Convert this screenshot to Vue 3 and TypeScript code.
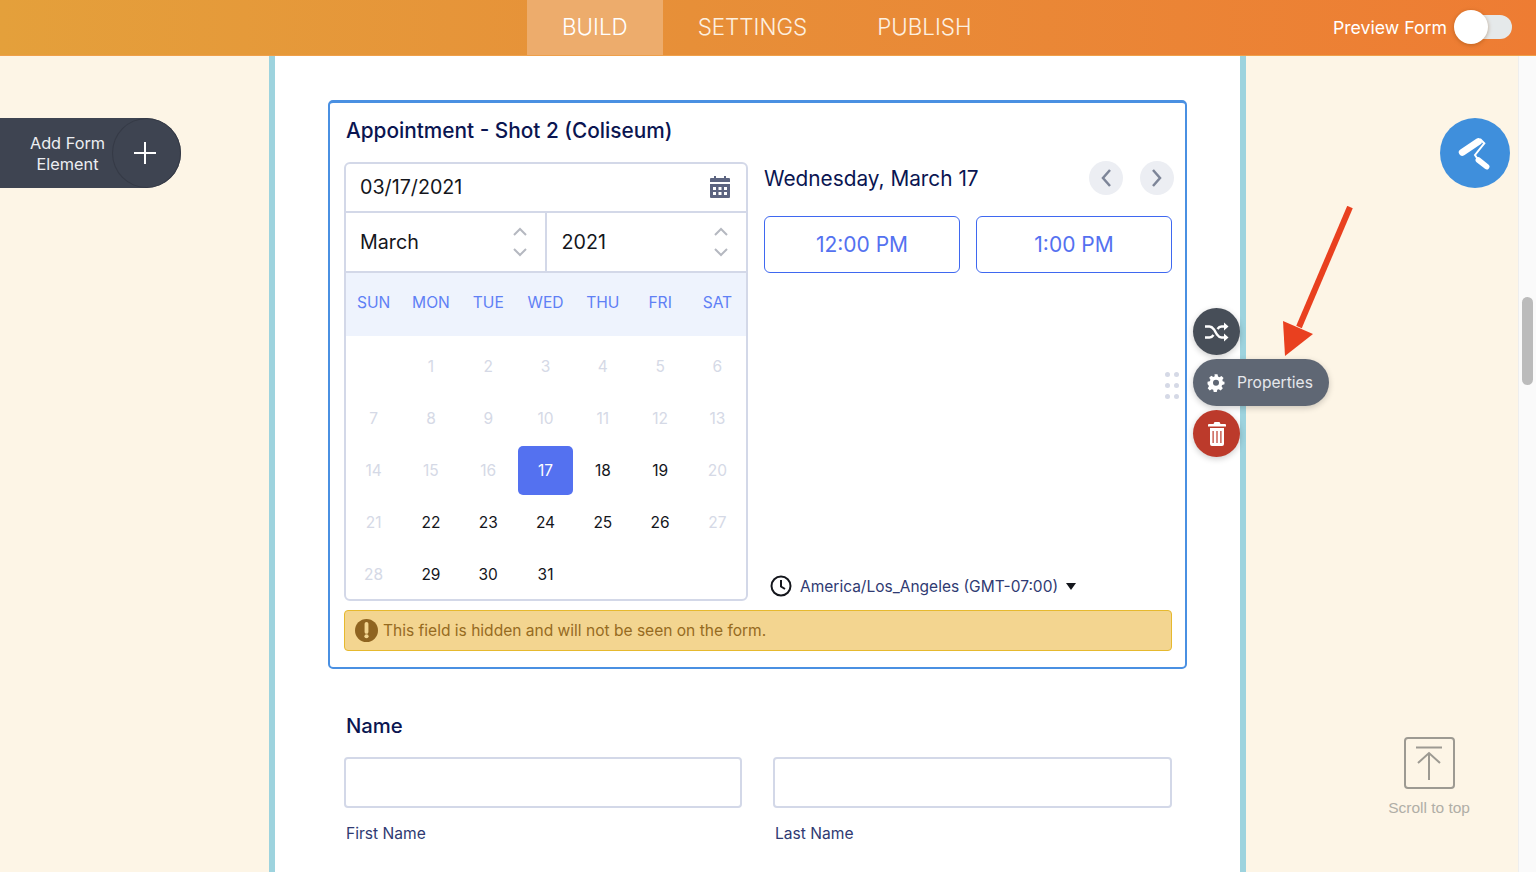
<template>
  <div class="page">
    <header class="topbar">
      <nav class="tabs">
        <a v-for="tab in tabs" :key="tab" class="tab" :class="{ active: tab === 'BUILD' }">{{ tab }}</a>
      </nav>
      <div class="preview">
        <span>Preview Form</span>
        <span class="toggle"><span class="knob"></span></span>
      </div>
    </header>

    <main class="workspace">
      <aside class="left-rail">
        <button class="add-element">
          <span class="add-label">Add Form<br />Element</span>
          <span class="add-plus">
            <svg width="24" height="24" viewBox="0 0 24 24"><path d="M12 1v22M1 12h22" stroke="#fff" stroke-width="2" fill="none" /></svg>
          </span>
        </button>
      </aside>

      <section class="canvas">
        <div class="field-box">
          <h2 class="field-title">Appointment - Shot 2 (Coliseum)</h2>
          <div class="appointment">
            <div class="calendar">
              <div class="date-row">
                <span>03/17/2021</span>
                <svg width="22" height="22" viewBox="0 0 22 22">
                  <path fill="#5c6480" d="M5 0h2v2h8V0h2v2h3a1 1 0 0 1 1 1v3H1V3a1 1 0 0 1 1-1h3zM1 8h20v13a1 1 0 0 1-1 1H2a1 1 0 0 1-1-1zm3 3v3h3v-3zm5.500 0v3h3v-3zm5.500 0v3h3v-3zM4 16v3h3v-3zm5.500 0v3h3v-3zm5.500 0v3h3v-3z" />
                </svg>
              </div>
              <div class="select-row">
                <div v-for="s in selects" :key="s" class="select-cell">
                  <span>{{ s }}</span>
                  <span class="stepper">
                    <svg width="14" height="9" viewBox="0 0 14 9"><path d="M1 8l6-6 6 6" stroke="#b5b8c0" stroke-width="2" fill="none" /></svg>
                    <svg width="14" height="9" viewBox="0 0 14 9"><path d="M1 1l6 6 6-6" stroke="#b5b8c0" stroke-width="2" fill="none" /></svg>
                  </span>
                </div>
              </div>
              <div class="week-head">
                <span v-for="d in weekDays" :key="d">{{ d }}</span>
              </div>
              <div class="days">
                <span v-for="(c, i) in cells" :key="i" class="day" :class="c.kind">{{ c.label }}</span>
              </div>
            </div>

            <div class="slots">
              <div class="slots-head">
                <span class="slots-date">Wednesday, March 17</span>
                <span class="slots-nav">
                  <button class="nav-btn">
                    <svg width="12" height="20" viewBox="0 0 12 20"><path d="M10 2L3 10l7 8" stroke="#7d8598" stroke-width="2.500" fill="none" /></svg>
                  </button>
                  <button class="nav-btn">
                    <svg width="12" height="20" viewBox="0 0 12 20"><path d="M2 2l7 8-7 8" stroke="#7d8598" stroke-width="2.500" fill="none" /></svg>
                  </button>
                </span>
              </div>
              <div class="slot-list">
                <button class="slot">12:00 PM</button>
                <button class="slot">1:00 PM</button>
              </div>
              <div class="timezone">
                <svg width="22" height="22" viewBox="0 0 22 22">
                  <circle cx="11" cy="11" r="9.500" stroke="#14161c" stroke-width="2" fill="none" />
                  <path d="M11 5v6.500l4 2.500" stroke="#14161c" stroke-width="2" fill="none" />
                </svg>
                <span>America/Los_Angeles (GMT-07:00)</span>
                <i class="caret"></i>
              </div>
            </div>
          </div>
          <div class="notice">
            <svg width="23" height="23" viewBox="0 0 24 24">
              <circle cx="12" cy="12" r="12" fill="#8f6420" />
              <path d="M12 5v8.500" stroke="#f3d590" stroke-width="4" stroke-linecap="round" />
              <circle cx="12" cy="18" r="2.200" fill="#f3d590" />
            </svg>
            <span>This field is hidden and will not be seen on the form.</span>
          </div>
        </div>

        <div class="name-field">
          <h3 class="name-title">Name</h3>
          <div class="name-grid">
            <div v-for="n in nameParts" :key="n">
              <div class="text-input"></div>
              <label class="sub-label">{{ n }}</label>
            </div>
          </div>
        </div>

        <div class="tools">
          <button class="tool shuffle">
            <svg width="25" height="22" viewBox="0 0 25 22">
              <path d="M1 5.500h4.500c2 0 3 1 4.500 3l3 5c1.500 2 2.500 3 4.500 3H21M1 16.500h4.500c2 0 3-1 4-2.500M13.500 8c1-1.500 2-2.500 4-2.500H21" stroke="#fff" stroke-width="2.400" fill="none" />
              <path d="M20 1.500l4.500 4-4.500 4zM20 12.500l4.500 4-4.500 4z" fill="#fff" />
            </svg>
          </button>
          <button class="tool props">
            <svg width="18" height="18" viewBox="0 0.700 24 24">
              <path fill="#fff" fill-rule="evenodd" d="M10 1h4l.7 3.100 1.900.8 2.700-1.700 2.800 2.800-1.700 2.700.8 1.900L23.300 11v3.500l-3.100.7-.8 1.900 1.700 2.700-2.800 2.800-2.700-1.700-1.900.8-.7 3.100h-4l-.7-3.100-1.900-.8-2.700 1.700-2.800-2.800 1.700-2.700-.8-1.900L.7 14.500V11l3.100-.7.800-1.900-1.700-2.700 2.800-2.800 2.700 1.700 1.900-.8zM12 8.500a4 4 0 1 0 0 8 4 4 0 0 0 0-8z" />
            </svg>
            <span>Properties</span>
          </button>
          <button class="tool trash">
            <svg width="18" height="24" viewBox="0 0 18 24">
              <path fill="#fff" fill-rule="evenodd" d="M6.500 0h5l1 2H17a1 1 0 0 1 1 1v1.500H0V3a1 1 0 0 1 1-1h4.500zM2 6h14v16a2 2 0 0 1-2 2H4a2 2 0 0 1-2-2zm2.500 3v12h1.200V9zm3.900 0v12h1.200V9zm3.900 0v12h1.200V9z" />
            </svg>
          </button>
          <div class="grip">
            <i v-for="n in 6" :key="n"></i>
          </div>
        </div>
      </section>

      <aside class="right-rail">
        <button class="paint">
          <svg width="34" height="36" viewBox="0 0 34 36">
            <path d="M4.300 17.300L20.300 6.700" stroke="#fff" stroke-width="7" stroke-linecap="round" fill="none" />
            <path d="M22 4l4.300 4.300L17 20l3.300 5" stroke="#fff" stroke-width="2" fill="none" />
            <path d="M20.300 25l8.400 6.700" stroke="#fff" stroke-width="5.500" stroke-linecap="round" fill="none" />
          </svg>
        </button>
        <div class="scroll-top">
          <span class="scroll-box">
            <svg width="28" height="34" viewBox="0 0 28 34">
              <path d="M1 1.500h26M14 7v27M3 17L14 7l11 10" stroke="#9d9a92" stroke-width="2" fill="none" />
            </svg>
          </span>
          <span class="scroll-text">Scroll to top</span>
        </div>
      </aside>

      <div class="scrollbar"><i></i></div>

      <svg class="arrow" width="80" height="160" viewBox="0 0 80 160">
        <path d="M68 1L17 121" stroke="#e9401f" stroke-width="6" fill="none" />
        <path d="M1 115l30 13-28 22z" fill="#e9401f" />
      </svg>
    </main>
  </div>
</template>

<script setup lang="ts">
type Cell = { label: string; kind: string }

const tabs = ['BUILD', 'SETTINGS', 'PUBLISH']
const selects = ['March', '2021']
const weekDays = ['SUN', 'MON', 'TUE', 'WED', 'THU', 'FRI', 'SAT']
const nameParts = ['First Name', 'Last Name']

const enabled = [18, 19, 22, 23, 24, 25, 26, 29, 30, 31]

const cells: Cell[] = [{ label: '', kind: 'off' }]
for (let d = 1; d <= 31; d++) {
  let kind = 'off'
  if (d === 17) kind = 'selected'
  else if (enabled.includes(d)) kind = 'on'
  cells.push({ label: String(d), kind })
}
</script>

<style>
html,
body {
  margin: 0;
  height: 100%;
  overflow: hidden;
}
</style>

<style scoped>
.page {
  width: 1536px;
  height: 872px;
  overflow: hidden;
  font-family: Inter, 'Liberation Sans', sans-serif;
  color: #0a1551;
  background: #fdf5e6;
}

button {
  border: none;
  padding: 0;
  font-family: inherit;
}

.topbar {
  height: 56px;
  box-sizing: border-box;
  border-bottom: 1px solid #efa04a;
  display: flex;
  align-items: stretch;
  padding: 0 24px 0 527px;
  background: linear-gradient(90deg, #e4a03b 0%, #e78f38 45%, #ee7c33 100%);
}

.tabs {
  display: flex;
}

.tab {
  padding: 0 35px 2px;
  display: flex;
  align-items: center;
  font-size: 22.400px;
  font-weight: 300;
  color: #fdf0e0;
}

.tab.active {
  background: #edac6c;
  color: #fff;
}

.preview {
  margin-left: auto;
  padding-bottom: 1px;
  display: flex;
  align-items: center;
  font-size: 17.700px;
  color: #fff;
}

.toggle {
  width: 50px;
  height: 24px;
  border-radius: 12px;
  background: #e5e9ea;
  position: relative;
  margin-left: 15px;
}

.knob {
  position: absolute;
  left: -8px;
  top: -5px;
  width: 34px;
  height: 34px;
  border-radius: 50%;
  background: #fff;
  box-shadow: 0 1px 4px rgba(120, 60, 0, 0.4);
}

.workspace {
  height: 816px;
  display: flex;
  position: relative;
}

.left-rail {
  width: 269px;
  flex: none;
  padding-top: 62px;
}

.add-element {
  width: 181px;
  height: 70px;
  background: #3e4451;
  border-radius: 0 35px 35px 0;
  color: #fff;
  display: flex;
  align-items: center;
  box-sizing: border-box;
}

.add-label {
  width: 112px;
  padding: 1px 0 0 23px;
  box-sizing: border-box;
  text-align: center;
  font-size: 16.300px;
  line-height: 21px;
  white-space: nowrap;
  color: #eceef2;
}

.add-plus {
  width: 69px;
  height: 70px;
  flex: none;
  border-radius: 50%;
  border: 1px solid #353a46;
  box-sizing: border-box;
  padding-right: 3px;
  display: flex;
  align-items: center;
  justify-content: center;
}

.canvas {
  width: 977px;
  flex: none;
  background: #fff;
  border-left: 6px solid #9dd3de;
  border-right: 6px solid #9dd3de;
  padding: 44px 53px 0;
  box-sizing: border-box;
  position: relative;
}

.field-box {
  border: 2px solid #4a90e2;
  border-top-width: 3px;
  border-radius: 5px;
  height: 569px;
  width: 859px;
  padding: 0 13px 0 14px;
  box-sizing: border-box;
}

.field-title {
  margin: 15px 0 0 2px;
  font-size: 20.800px;
  line-height: 26px;
  font-weight: 500;
  color: #0a1551;
}

.appointment {
  display: flex;
  margin-top: 18px;
  height: 439px;
}

.calendar {
  width: 404px;
  height: 439px;
  flex: none;
  box-sizing: border-box;
  border: 2px solid #d3d8e8;
  border-radius: 6px;
  overflow: hidden;
}

.date-row {
  height: 49px;
  box-sizing: border-box;
  display: flex;
  align-items: center;
  justify-content: space-between;
  padding: 0 15px 2px 14px;
  font-size: 19.700px;
  color: #14161c;
  border-bottom: 2px solid #d3d8e8;
}

.select-row {
  height: 60px;
  box-sizing: border-box;
  display: flex;
  border-bottom: 2px solid #d3d8e8;
}

.select-cell {
  flex: 1;
  display: flex;
  align-items: center;
  justify-content: space-between;
  padding: 0 18px 0 14px;
  font-size: 19.700px;
  color: #14161c;
}

.select-cell:first-child {
  border-right: 2px solid #d3d8e8;
}

.select-cell:last-child {
  padding-left: 15px;
}

.stepper {
  display: flex;
  flex-direction: column;
  gap: 12px;
}

.week-head {
  height: 63px;
  box-sizing: border-box;
  padding-bottom: 4px;
  margin-left: -1px;
  display: grid;
  grid-template-columns: repeat(7, 57.300px);
  align-items: center;
  justify-items: center;
  background: #eef3fd;
  color: #5f80f5;
  font-size: 15.600px;
}

.days {
  display: grid;
  margin-left: -1px;
  grid-template-columns: repeat(7, 57.300px);
  grid-auto-rows: 52px;
  padding-top: 4px;
  justify-items: center;
  align-items: center;
  font-size: 15.500px;
}

.day {
  width: 55px;
  height: 49px;
  display: flex;
  align-items: center;
  justify-content: center;
  border-radius: 5px;
}

.day.off {
  color: #d5d9e6;
}

.day.on {
  color: #14161c;
}

.day.selected {
  background: #5471f0;
  color: #fff;
}

.slots {
  flex: 1;
  padding-left: 16px;
  display: flex;
  flex-direction: column;
}

.slots-head {
  display: flex;
  justify-content: space-between;
  align-items: center;
  height: 34px;
  margin-top: -1px;
}

.slots-date {
  font-size: 20.800px;
  color: #0a1551;
}

.slots-nav {
  display: flex;
  gap: 17px;
  margin-right: -2px;
}

.nav-btn {
  width: 34px;
  height: 34px;
  border-radius: 50%;
  background: #eceef3;
  display: flex;
  align-items: center;
  justify-content: center;
}

.slot-list {
  margin-top: 21px;
  display: grid;
  grid-template-columns: 196px 196px;
  column-gap: 16px;
}

.slot {
  height: 57px;
  border: 1.500px solid #3f68f0;
  border-radius: 6px;
  background: #fff;
  color: #5471f0;
  font-size: 21px;
}

.timezone {
  margin-top: auto;
  margin-bottom: 4px;
  margin-left: 6px;
  display: flex;
  align-items: center;
  gap: 8px;
  font-size: 15.500px;
  color: #2f3a72;
}

.caret {
  width: 0;
  height: 0;
  border-left: 5.500px solid transparent;
  border-right: 5.500px solid transparent;
  border-top: 7px solid #14161c;
}

.notice {
  margin-top: 9px;
  height: 41px;
  box-sizing: border-box;
  border: 1px solid #e6b92e;
  border-radius: 4px;
  background: #f3d590;
  color: #966b1f;
  font-size: 15.550px;
  display: flex;
  align-items: center;
  gap: 5px;
  padding-left: 10px;
}

.name-field {
  padding: 44px 0 0 18px;
  width: 829px;
}

.name-title {
  margin: 0;
  font-size: 20.300px;
  line-height: 26px;
  font-weight: 500;
  color: #0a1551;
}

.name-grid {
  display: grid;
  grid-template-columns: 398px 399px;
  column-gap: 31px;
  margin-top: 18px;
  margin-left: -2px;
}

.text-input {
  height: 51px;
  box-sizing: border-box;
  border: 2px solid #d3d8e8;
  border-radius: 4px;
}

.sub-label {
  display: block;
  margin: 16px 0 0 2px;
  font-size: 15.600px;
  color: #2f3a72;
}

.tools {
  position: absolute;
  left: 918px;
  top: 252px;
  display: flex;
  flex-direction: column;
  gap: 4px;
  align-items: flex-start;
}

.tool {
  height: 47px;
  min-width: 47px;
  border-radius: 24px;
  display: flex;
  align-items: center;
  justify-content: center;
  box-shadow: 0 2px 6px rgba(0, 0, 0, 0.2);
}

.shuffle {
  background: #474e58;
}

.props {
  width: 136px;
  background: #5f6774;
  color: #e6e8ec;
  font-size: 15.600px;
  gap: 12px;
  justify-content: flex-start;
  padding-left: 14px;
}

.trash {
  background: #bc3a2b;
}

.grip {
  position: absolute;
  left: -28px;
  top: 64px;
  display: grid;
  grid-template-columns: 5px 5px;
  gap: 6px;
  column-gap: 4px;
}

.grip i {
  width: 5px;
  height: 5px;
  border-radius: 50%;
  background: #d5d9e6;
}

.right-rail {
  flex: 1;
  position: relative;
  padding-top: 62px;
  display: flex;
  flex-direction: column;
  align-items: flex-end;
}

.paint {
  width: 70px;
  height: 70px;
  border-radius: 50%;
  background: #3f8fdc;
  display: flex;
  align-items: center;
  justify-content: center;
  margin-right: 8px;
}

.scroll-top {
  margin-top: 549px;
  margin-right: 48px;
  display: flex;
  flex-direction: column;
  align-items: center;
}

.scroll-box {
  width: 51px;
  height: 52px;
  box-sizing: border-box;
  border: 2px solid #9d9a92;
  border-radius: 4px;
  display: flex;
  align-items: center;
  justify-content: center;
}

.scroll-text {
  margin-top: 10px;
  font-family: 'Liberation Sans', sans-serif;
  font-size: 15.500px;
  color: #b0aea6;
}

.scrollbar {
  width: 18px;
  flex: none;
  background: #fafafa;
  border-left: 1px solid #eeeeee;
  box-sizing: border-box;
  padding: 241px 0 0 3px;
}

.scrollbar i {
  display: block;
  width: 11px;
  height: 88px;
  border-radius: 6px;
  background: #bbbbbb;
}

.arrow {
  position: absolute;
  left: 1282px;
  top: 150px;
}
</style>
